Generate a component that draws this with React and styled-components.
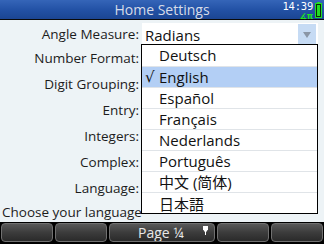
import React from 'react';
import styled, { createGlobalStyle } from 'styled-components';

const GlobalStyle = createGlobalStyle`
  html, body {
    margin: 0;
    padding: 0;
    background: #000;
  }
  body {
    font-family: "Open Sans", "Noto Sans", sans-serif;
  }
`;

const languages = [
  { name: 'Deutsch' },
  { name: 'English', checked: true },
  { name: 'Español' },
  { name: 'Français' },
  { name: 'Nederlands' },
  { name: 'Português' },
  { name: '中文 (简体)', cjk: 'sc' },
  { name: '日本語', cjk: 'jp' },
];

const labels = ['Number Format:', 'Digit Grouping:', 'Entry:', 'Integers:', 'Complex:', 'Language:'];

const App = () => {
  return (
    <>
      <GlobalStyle />
      <Screen>
        <TitleBar>
          <Title>Home Settings</Title>
          <Status>
            <Clock>14:39</Clock>
            <Mode>∡π</Mode>
          </Status>
          <Battery>
            <svg width="7" height="16" viewBox="0 0 7 16">
              <rect x="2" y="0" width="3" height="1.5" fill="#22dd22" />
              <rect x="0.5" y="1.5" width="6" height="14" fill="#0a2a0a" stroke="#22dd22" strokeWidth="1" />
              <rect x="2" y="3" width="3" height="11" fill="#22dd22" />
            </svg>
          </Battery>
        </TitleBar>

        <Content>
          <AngleRow>
            <Label $h={22}>Angle Measure:</Label>
            <Field>
              <FieldText>Radians</FieldText>
              <ArrowBox>
                <svg width="8" height="6" viewBox="0 0 8 6">
                  <path d="M0 0 L8 0 L4 6 Z" fill="#8a96a6" />
                </svg>
              </ArrowBox>
            </Field>
          </AngleRow>
          {labels.map((l) => (
            <Row key={l}>
              <Label $h={26}>{l}</Label>
            </Row>
          ))}
          <Help>Choose your language</Help>
        </Content>

        <Menu>
          {languages.map((lang) => (
            <MenuItem key={lang.name} $active={lang.checked} $cjk={lang.cjk}>
              {lang.checked && <Check>√</Check>}
              {lang.name}
            </MenuItem>
          ))}
        </Menu>

        <SoftKeys>
          <Key />
          <Key />
          <Key $span={2}>
            <KeyText>Page ¼</KeyText>
            <Pin>
              <svg width="5" height="9" viewBox="0 0 5 9">
                <rect x="0" y="0" width="5" height="4" fill="#fff" />
                <path d="M0.5 4 L4.5 4 L2.5 7 Z" fill="#fff" />
                <rect x="2" y="6" width="1" height="3" fill="#fff" />
              </svg>
            </Pin>
          </Key>
          <Key />
          <Key />
        </SoftKeys>
      </Screen>
    </>
  );
};

const Screen = styled.div`
  position: relative;
  width: 324px;
  height: 244px;
  overflow: hidden;
  background: #edf3f6;
  display: flex;
  flex-direction: column;
`;

const TitleBar = styled.div`
  position: relative;
  height: 19px;
  flex-shrink: 0;
  background: linear-gradient(#3565b8, #2352a6 50%, #1b4593);
  border-bottom: 1px solid #0a0a0a;
  display: flex;
  align-items: center;
  justify-content: center;
`;

const Title = styled.div`
  color: #d6dce8;
  font-size: 14px;
  line-height: 19px;
`;

const Status = styled.div`
  position: absolute;
  right: 11px;
  top: 1px;
  display: flex;
  flex-direction: column;
  align-items: flex-end;
  gap: 2px;
`;

const Clock = styled.div`
  color: #ffffff;
  font-family: "DejaVu Sans Mono", monospace;
  font-size: 10.5px;
  line-height: 10px;
  letter-spacing: -0.2px;
`;

const Mode = styled.div`
  color: #1ee61e;
  font-family: "DejaVu Sans", sans-serif;
  font-size: 8px;
  line-height: 7px;
  font-weight: bold;
`;

const Battery = styled.div`
  position: absolute;
  right: 2px;
  top: 2px;
  display: flex;
`;

const Content = styled.div`
  flex: 1;
  display: flex;
  flex-direction: column;
  padding-top: 3px;
  color: #1c1c1c;
`;

const AngleRow = styled.div`
  display: grid;
  grid-template-columns: 139px 1fr;
  column-gap: 3px;
  height: 22px;
  padding-right: 6px;
`;

const Row = styled.div`
  display: grid;
  grid-template-columns: 139px 1fr;
  height: 26px;
`;

const Label = styled.div`
  text-align: right;
  font-size: 13.5px;
  line-height: ${(p) => p.$h}px;
  white-space: nowrap;
`;

const Field = styled.div`
  display: flex;
  align-items: center;
  background: #ffffff;
`;

const FieldText = styled.div`
  flex: 1;
  font-size: 15px;
  line-height: 22px;
  padding-left: 3px;
  padding-top: 1px;
  color: #111;
`;

const ArrowBox = styled.div`
  width: 18px;
  height: 22px;
  background: #c6dbf4;
  display: flex;
  align-items: center;
  justify-content: center;
  margin-right: 2px;
`;

const Help = styled.div`
  margin-top: 2px;
  padding-left: 2px;
  font-size: 13.5px;
  line-height: 19px;
  white-space: nowrap;
`;

const Menu = styled.div`
  position: absolute;
  left: 141px;
  top: 44px;
  width: 175px;
  background: #ffffff;
  border: 1px solid #000;
  display: flex;
  flex-direction: column;
`;

const MenuItem = styled.div`
  position: relative;
  height: 21px;
  box-sizing: border-box;
  padding-left: 17px;
  font-size: 15px;
  line-height: 21px;
  color: #111;
  background: ${(p) => (p.$active ? '#b3cff5' : '#ffffff')};
  border-top: 1px solid #e0e4e8;
  font-family: ${(p) =>
    p.$cjk === 'sc'
      ? '"Open Sans", "Noto Sans CJK SC", sans-serif'
      : p.$cjk === 'jp'
      ? '"Noto Sans CJK JP", sans-serif'
      : '"Open Sans", "Noto Sans", sans-serif'};
  &:first-child {
    border-top: none;
  }
`;

const Check = styled.span`
  position: absolute;
  left: 3px;
  top: 0;
  font-family: "DejaVu Sans", sans-serif;
  font-size: 15px;
`;

const SoftKeys = styled.div`
  height: 23px;
  flex-shrink: 0;
  background: #000;
  display: grid;
  grid-template-columns: repeat(6, 1fr);
  padding: 1px 1px 3px;
  box-sizing: border-box;
  column-gap: 2px;
`;

const Key = styled.div`
  grid-column: span ${(p) => p.$span || 1};
  position: relative;
  border: 1px solid #707070;
  border-radius: 4px;
  background: linear-gradient(#585858, #3c3c3c 50%, #2a2a2a);
  display: flex;
  align-items: center;
  padding-left: 28px;
  overflow: hidden;
`;

const KeyText = styled.div`
  color: #e8e8e8;
  font-size: 14px;
  line-height: 18px;
`;

const Pin = styled.div`
  position: absolute;
  right: 6px;
  top: 2px;
  display: flex;
`;

export default App;
